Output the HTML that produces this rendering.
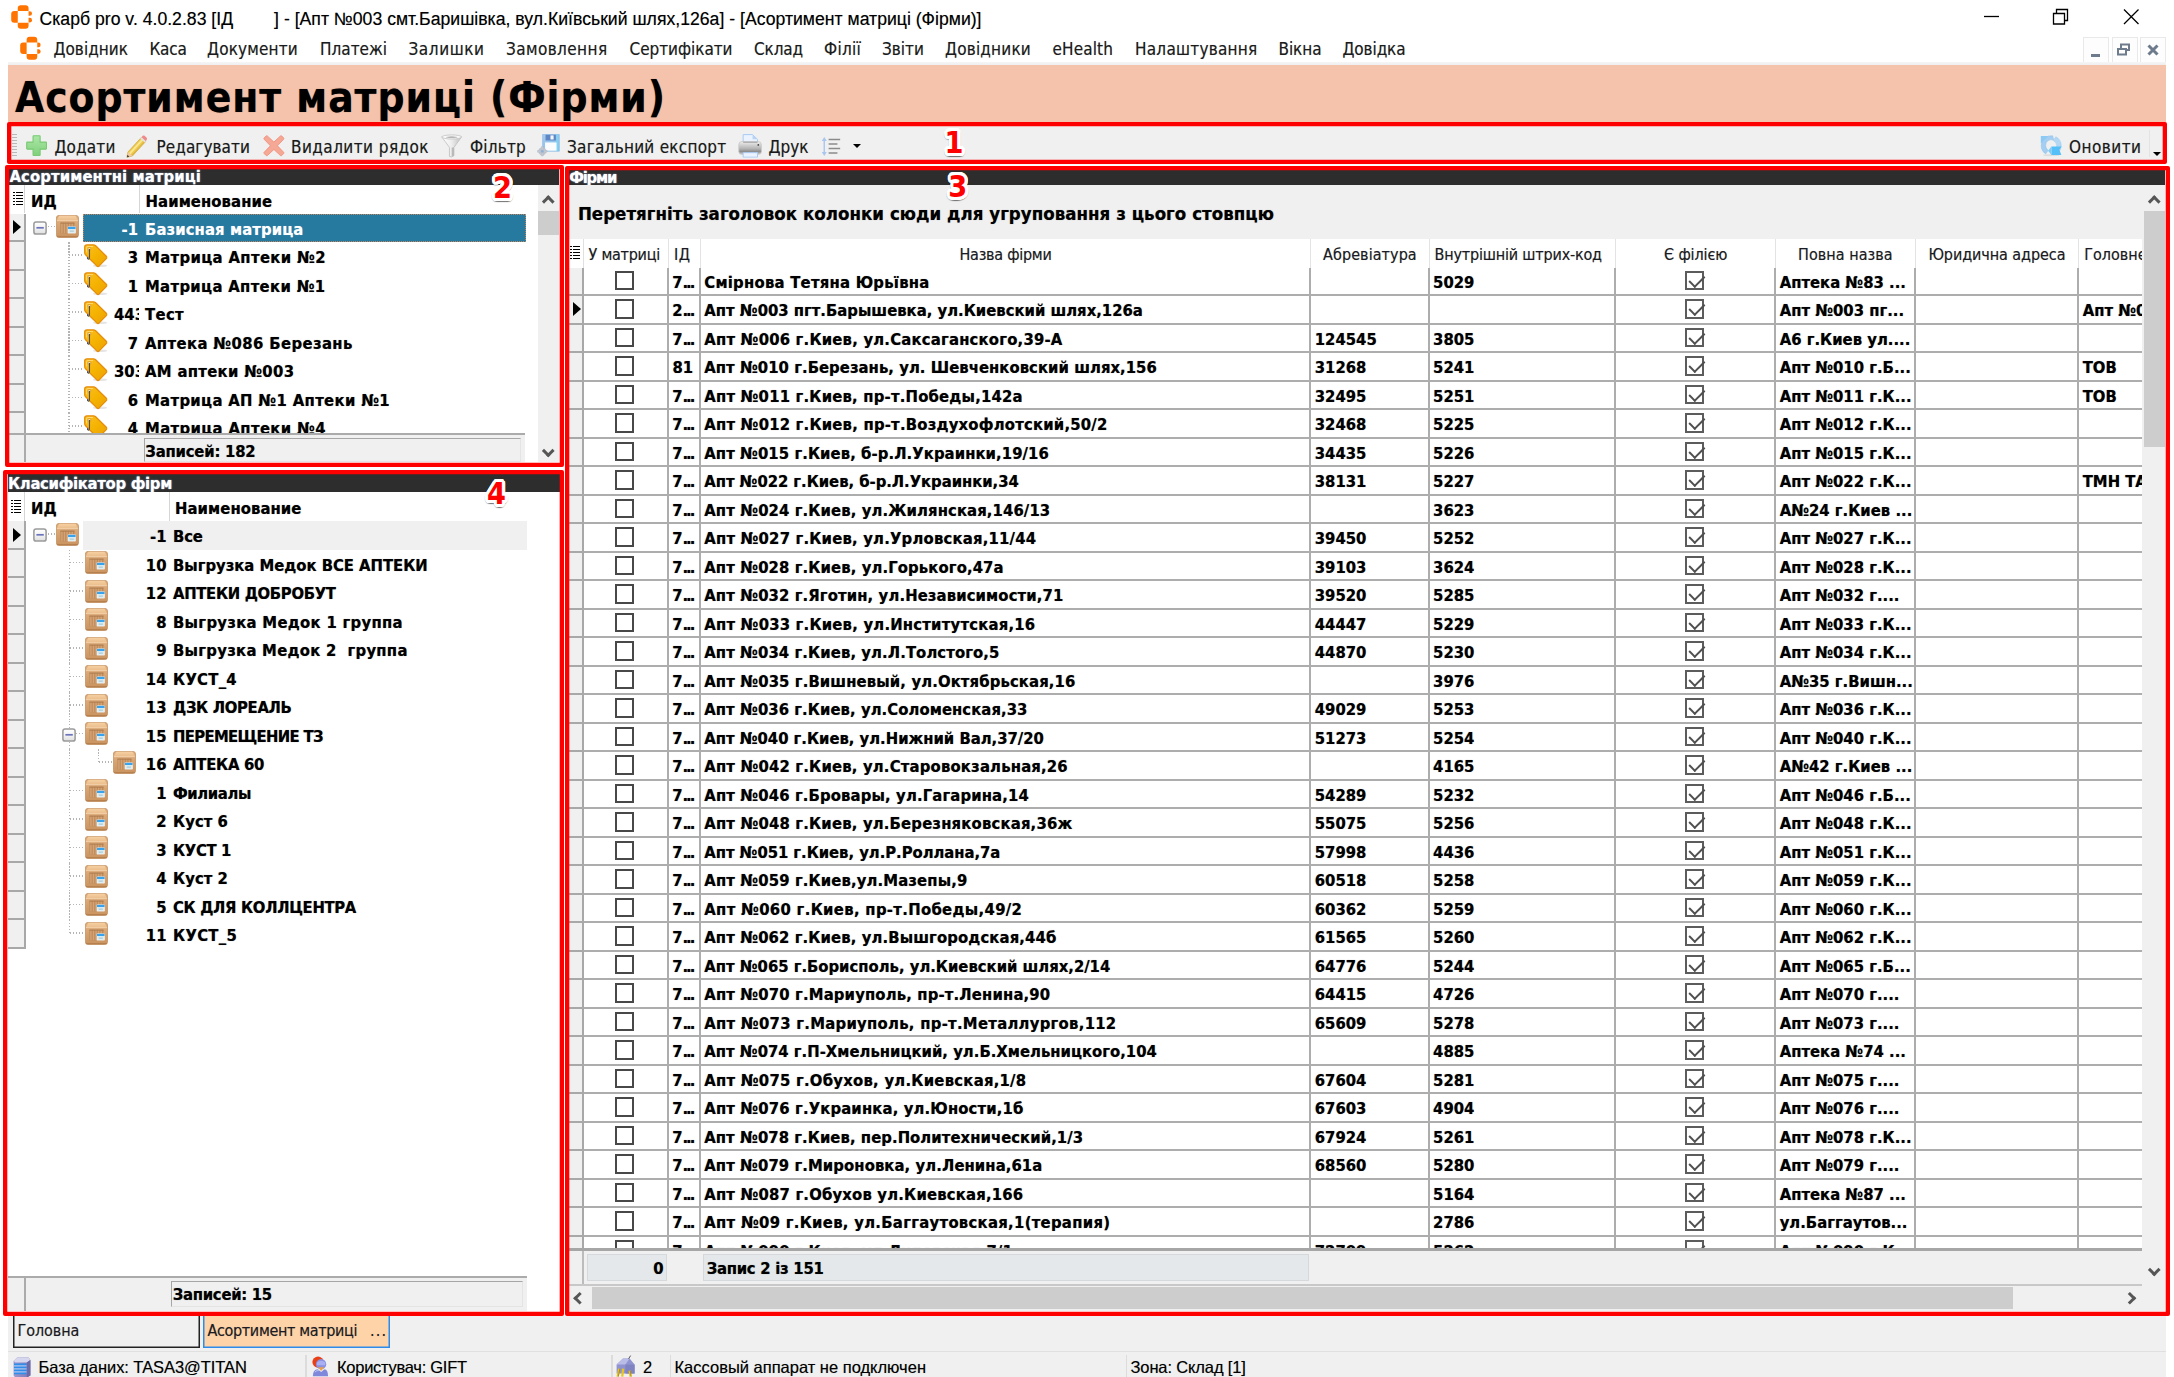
<!DOCTYPE html>
<html lang="uk"><head><meta charset="utf-8"><title>Скарб pro - Асортимент матриці (Фірми)</title>
<style>
*{box-sizing:border-box;margin:0;padding:0}
html,body{width:2174px;height:1377px;overflow:hidden;background:#fff}
body{position:relative;font-family:"DejaVu Sans Condensed","Liberation Sans","DejaVu Sans",sans-serif;font-size:16.5px;color:#000;-webkit-font-smoothing:antialiased}
i{font-style:normal;display:block;position:absolute}
.ic{position:absolute;overflow:visible}
#defs{position:absolute;width:0;height:0;overflow:hidden}

#titlebar{position:absolute;left:0;top:0;width:2174px;height:36px;background:#fff}
#wtitle{position:absolute;left:39.5px;top:8px;font-family:"Liberation Sans","DejaVu Sans",sans-serif;font-size:17.65px;line-height:22px;white-space:nowrap;color:#000}
#wtitle .gap{display:inline-block;width:41px}

#menubar{position:absolute;left:0;top:36px;width:2166px;height:28.5px;background:#fff}
#menubar:after{content:"";position:absolute;left:8px;right:0;bottom:0;height:2.5px;background:linear-gradient(#f6f6f6,#eeeeee)}
.mi{position:absolute;top:3.4px;font-size:17px;line-height:20px;white-space:nowrap;color:#1c1c1c}
.mdib{position:absolute;top:.6px;width:26px;height:26px;border:1.5px solid #e9e9e9;background:#fdfdfd}
.mdib svg{position:absolute;left:-1.5px;top:-1.5px}

#band{position:absolute;left:8px;top:64.5px;width:2158px;height:58px;background:#f5c2ab}
#band h1{position:absolute;left:7px;top:7.5px;font-size:42px;line-height:52px;font-weight:bold;white-space:nowrap}

#toolbar{position:absolute;left:8px;top:122px;width:2158px;height:42.5px;background:#f0f0f0;border-bottom:1.5px solid #fafafa}
#toolbar .ic,#toolbar .tbt,#toolbar i{margin-left:-8px;margin-top:-122px}
.tbt{position:absolute;top:136.7px;font-size:17px;line-height:20px;white-space:nowrap;color:#1a1a1a}
.grip{position:absolute;left:4px;top:11.8px;width:5px;height:22.5px;background:repeating-linear-gradient(#b9b9b9 0 1.5px,#f0f0f0 1.5px 3px)}
.tri{width:0;height:0;border-left:4.2px solid transparent;border-right:4.2px solid transparent;border-top:4.5px solid #000}
.tbsep{top:130px;width:1px;height:27px;background:#e3e3e3}

.panel{position:absolute;background:#fff;overflow:hidden}
#p2{left:9px;top:169px;width:549.8px;height:293px}
#p4{left:7.5px;top:474.4px;width:552.5px;height:836.8px}
#p3{left:568.7px;top:170px;width:1596.8px;height:1141.3px}
.cap{position:absolute;left:0;top:0;right:0;background:#2d2d2d;color:#fff;font-weight:bold;font-size:16.5px;line-height:16px;white-space:nowrap;overflow:hidden;padding-left:.5px;text-shadow:0 0 1.5px rgba(190,215,255,.9)}

.thead{position:absolute;left:0;right:0;height:28.9px;background:#fff;font-weight:bold;line-height:33.5px;white-space:nowrap}
.thead span{position:absolute;top:0;height:100%}
.hind{left:0;width:16px;border-right:1px solid #d6d6d6;background:#fff}
.hind:before{content:"";position:absolute;left:3.6px;top:7.6px;width:10px;height:13.5px;
 background:linear-gradient(90deg,#000 0 2px,transparent 2px 3.2px,#000 3.2px) ;
 -webkit-mask:repeating-linear-gradient(#000 0 1.5px,transparent 1.5px 3px);mask:repeating-linear-gradient(#000 0 1.5px,transparent 1.5px 3px)}
.thead .h1{left:16px;padding-left:6px;border-right:1px solid #d6d6d6}
.thead .h2{padding-left:5.6px}
#p2 .h2{left:131px}
#p4 .hind{width:17.5px}
#p4 .h1{left:17.5px}
#p4 .h2{left:161.9px}

.tbody{position:absolute;left:0;right:0;overflow:hidden}
.tr{position:relative;height:28.5px;font-weight:bold;line-height:32.5px;overflow:hidden;white-space:nowrap}
.tr>span{position:absolute;top:0;height:28.5px}
.ind{left:0;width:16.5px;background:#f0f0f0;border-right:2px solid #a8a8a8;border-bottom:2px solid #a8a8a8}
#p4 .ind{width:18px}
.cur{left:4.4px;top:6.6px;width:0;height:0;border-top:7.6px solid transparent;border-bottom:7.6px solid transparent;border-left:8.4px solid #000}
#p4 .cur{left:5.9px}
.tr .id{left:0;text-align:right}
.tr .idc{left:105px;width:24.5px;overflow:hidden;text-align:left}
.tr .hl{background:#f0f0f0}
.tr.sel .hl{background:#26799f;outline:1.3px dotted #c8855a;outline-offset:-1.3px}
.tr.sel .id,.tr.sel .nm{color:#fff}
.vd{top:0;width:1.5px;height:28.5px;background:repeating-linear-gradient(#b4b4b4 0 1.5px,transparent 1.5px 3px)}
.vd.half{height:14px}
.hd{top:12.2px;height:1.5px;background:repeating-linear-gradient(90deg,#b4b4b4 0 1.5px,transparent 1.5px 3px)}
.tfoot{position:absolute;left:0;background:#f0f0f0;border-top:2px solid #ababab;font-weight:bold}
.tfoot .find{position:absolute;left:0;top:0;bottom:0;width:16.5px;border-right:2px solid #ababab}
#p4 .tfoot .find{width:18px}
.fcell{position:absolute;border:1.5px solid #a6a6a6;border-right-color:#e4e4e4;border-bottom-color:#e4e4e4;background:#f0f0f0;padding-left:.8px;line-height:25px;white-space:nowrap}

.vsb{position:absolute;width:21.3px;background:#f0f0f0}
.vsb .thumb{left:0;right:0;background:#cdcdcd}
.ch{width:8.5px;height:8.5px;border:solid #565656;border-width:3px 0 0 3px}
.vsb .ch{left:6.6px}
.ch.up{transform:rotate(45deg)}
.ch.dn{transform:rotate(225deg)}
.ch.lf{transform:rotate(-45deg);top:8.5px}
.ch.rt{transform:rotate(135deg);top:8.5px}

#grp{position:absolute;left:0;right:0;top:14.6px;height:54.2px;background:#f0f0f0;font-size:18.5px;line-height:22px;padding:18px 0 0 9.2px;white-space:nowrap}
#ghead{position:absolute;left:0;top:68.8px;width:1573.5px;height:29.6px;background:#fff;white-space:nowrap;overflow:hidden;font-size:16px;line-height:31.5px;color:#1c1c24;display:flex}
#ghead .hind{position:relative;flex:none;width:14.9px;border-right:1px solid #e0e0e0}
#ghead .hind:before{left:1.2px;top:7.6px}
.gh{flex:none;overflow:hidden;border-right:1px solid #e3e3e3;padding:0 5px}
.gh.c{text-align:center}
#gbody{position:absolute;left:0;top:97.5px;width:1573.5px;height:981.3px;overflow:hidden;background:#fff}
.gr{display:flex;height:28.5px;font-weight:bold;line-height:29.1px;white-space:nowrap}
.gr .ind{position:relative;flex:none;width:14.9px;height:28.5px}
.gr .ind .cur{left:4.3px;top:6.4px}
.gc{position:relative;flex:none;height:28.5px;overflow:hidden;border-right:2px solid #adadad;border-bottom:2px solid #adadad;padding-left:3.5px}
.gc.r{text-align:right;padding:0 5.6px 0 0}
.gc .dd{letter-spacing:-2.1px}
.gc.last{border-right:0}
.cb{left:50%;top:3px;margin-left:-10.6px;width:19.5px;height:19.5px;border:2px solid #484848;background:#fff}
.cb.on{border-color:#5c5c5c;margin-left:-10.3px}
.cb.on:after{content:"";position:absolute;left:-1.2px;top:.2px;width:6.8px;height:12.8px;border:solid #505050;border-width:0 2.1px 2.1px 0;transform-origin:100% 100%;transform:rotate(45deg)}
#gfoot{position:absolute;left:0;top:1078.4px;width:1573.5px;height:37.2px;background:#f0f0f0;border-top:3px solid #a6a6a6;border-bottom:2px solid #c8c8c8;font-weight:bold}
#gfoot .find{position:absolute;left:0;top:0;bottom:0;width:14.9px;border-right:2px solid #bcbcbc}
.fc{position:absolute;top:3px;height:27px;line-height:27.5px;background:#e4e8ea;border:1px solid #d5d9db;white-space:nowrap}
#hsb{position:absolute;left:0;top:1115.6px;width:1573.5px;height:25.7px;background:#f0f0f0}
#hsb .thumb{top:1.3px;height:22px;background:#cdcdcd}
#vsb3{left:1573.5px;top:14.6px;width:23.3px;height:1101px}
#p3{background:#f0f0f0}
#vsb3 .ch{left:7.5px}
#vsb3 .thumb{left:2.2px}

.red{position:absolute;box-shadow:inset 0 0 0 4.3px #fe0000;border-radius:2px;pointer-events:none}
.badge{position:absolute;font-family:"DejaVu Sans Condensed","Liberation Sans","DejaVu Sans",sans-serif;font-weight:bold;font-size:30.3px;line-height:34px;color:#fe0000;text-shadow:3.00px 0.00px 0 #fff,2.90px 0.78px 0 #fff,2.60px 1.50px 0 #fff,2.12px 2.12px 0 #fff,1.50px 2.60px 0 #fff,0.78px 2.90px 0 #fff,0.00px 3.00px 0 #fff,-0.78px 2.90px 0 #fff,-1.50px 2.60px 0 #fff,-2.12px 2.12px 0 #fff,-2.60px 1.50px 0 #fff,-2.90px 0.78px 0 #fff,-3.00px 0.00px 0 #fff,-2.90px -0.78px 0 #fff,-2.60px -1.50px 0 #fff,-2.12px -2.12px 0 #fff,-1.50px -2.60px 0 #fff,-0.78px -2.90px 0 #fff,-0.00px -3.00px 0 #fff,0.78px -2.90px 0 #fff,1.50px -2.60px 0 #fff,2.12px -2.12px 0 #fff,2.60px -1.50px 0 #fff,2.90px -0.78px 0 #fff,1.60px 0.00px 0 #fff,1.39px 0.80px 0 #fff,0.80px 1.39px 0 #fff,0.00px 1.60px 0 #fff,-0.80px 1.39px 0 #fff,-1.39px 0.80px 0 #fff,-1.60px 0.00px 0 #fff,-1.39px -0.80px 0 #fff,-0.80px -1.39px 0 #fff,-0.00px -1.60px 0 #fff,0.80px -1.39px 0 #fff,1.39px -0.80px 0 #fff,3.00px 1.30px 1px rgba(0,0,0,.22),2.77px 2.45px 1px rgba(0,0,0,.22),2.12px 3.42px 1px rgba(0,0,0,.22),1.15px 4.07px 1px rgba(0,0,0,.22),0.00px 4.30px 1px rgba(0,0,0,.22),-1.15px 4.07px 1px rgba(0,0,0,.22),-2.12px 3.42px 1px rgba(0,0,0,.22),-2.77px 2.45px 1px rgba(0,0,0,.22),-3.00px 1.30px 1px rgba(0,0,0,.22)}

#tabs{position:absolute;left:8px;top:1315.6px;width:2158px;height:36px;background:#f0f0f0}
.tab{position:absolute;top:0;height:32px;padding-top:0;box-shadow:inset 1.5px 0 #222,inset -1.5px 0 #222,inset 0 -1.5px #222;font-size:16px;line-height:29.5px;padding-left:5px;white-space:nowrap;color:#1c1c24}
.tab.act{background:#ffd3a8;box-shadow:inset 1.5px 0 #2d8ceb,inset -1.5px 0 #2d8ceb,inset 0 -1.5px #2d8ceb}
#status{position:absolute;left:8px;top:1350.6px;width:2158px;height:26.4px;background:#f0f0f0;border-top:1.5px solid #e0e0e0}
#status .ic,#status .st,#status .ssep{margin-top:-1.5px}
.st{position:absolute;top:7.2px;font-family:"Liberation Sans","DejaVu Sans",sans-serif;font-size:16.5px;line-height:20px;white-space:nowrap;color:#000}
.ssep{top:5px;width:1.5px;height:22px;background:#dcdcdc}

.tab .dots{position:absolute;left:167.5px;top:0;font-style:normal;letter-spacing:1.2px}

.gr,.tr,.thead,.tfoot,#gfoot,#grp,#band h1{text-shadow:0 0 .8px rgba(0,0,0,.5)}
.tr.sel .id,.tr.sel .nm{text-shadow:0 0 .8px rgba(255,255,255,.5)}
.mi,.tbt,.gh,.tab,.st,#wtitle{text-shadow:0 0 .7px rgba(0,0,0,.35)}

</style></head><body>
<svg id="defs" width="0" height="0" aria-hidden="true"><defs>
<linearGradient id="gBoxF" x1="0" y1="0" x2="0" y2="1"><stop offset="0" stop-color="#e2b281"/><stop offset="1" stop-color="#c9935f"/></linearGradient>
<linearGradient id="gBoxT" x1="0" y1="0" x2="0" y2="1"><stop offset="0" stop-color="#f6d0a2"/><stop offset="1" stop-color="#ebbd8b"/></linearGradient>
<linearGradient id="gTag" x1="0" y1="0" x2="1" y2="1"><stop offset="0" stop-color="#fbbf24"/><stop offset=".5" stop-color="#f5b301"/><stop offset="1" stop-color="#ec9f06"/></linearGradient>
<linearGradient id="gPlus" x1="0" y1="0" x2="0" y2="1"><stop offset="0" stop-color="#abe7a6"/><stop offset="1" stop-color="#7fd07b"/></linearGradient>
<linearGradient id="gMinus" x1="0" y1="0" x2="0" y2="1"><stop offset="0" stop-color="#ffffff"/><stop offset=".5" stop-color="#f3f3f3"/><stop offset="1" stop-color="#dedede"/></linearGradient>
<linearGradient id="gPrn" x1="0" y1="0" x2="0" y2="1"><stop offset="0" stop-color="#eeeeee"/><stop offset=".55" stop-color="#b4b4b4"/><stop offset=".78" stop-color="#8c8c8c"/><stop offset="1" stop-color="#d2d2d2"/></linearGradient>
<linearGradient id="gFun" x1="0" y1="0" x2="1" y2="0"><stop offset="0" stop-color="#ffffff"/><stop offset=".5" stop-color="#ededed"/><stop offset="1" stop-color="#bdbdbd"/></linearGradient>
<linearGradient id="gSave" x1="0" y1="0" x2="1" y2="1"><stop offset="0" stop-color="#a9c7ea"/><stop offset="1" stop-color="#7fc4ee"/></linearGradient>
<linearGradient id="gDb" x1="0" y1="0" x2="1" y2="0"><stop offset="0" stop-color="#9b97cf"/><stop offset="1" stop-color="#7d79b4"/></linearGradient>
<symbol id="logo" viewBox="0 0 22 24"><g fill="#ff7400"><path d="M10 0H14.800Q17.900 0 17.900 3V5.900H6.900V3Q6.900 0 10 0z"/><path d="M3.300 5.900H6.900V18H3.300Q.2 18 .2 14.900V9Q.2 5.900 3.300 5.900z"/><path d="M6.900 18H17.900V20.900Q17.900 23.900 14.800 23.900H10Q6.900 23.900 6.900 20.900z"/><path d="M17.900 6.100H19Q21.400 6.100 21.400 8.500Q21.400 10.900 19 10.900H17.900z"/><path d="M17.900 12.900H19Q21.400 12.900 21.400 15.300Q21.400 17.700 19 17.700H17.900z"/></g></symbol>
<symbol id="box" viewBox="0 0 24 24"><rect x=".4" y=".4" width="23.2" height="23.2" rx="2.8" fill="url(#gBoxF)" stroke="#c18d5c" stroke-width=".8"/><path d="M1 5.6L3.2 1.2Q3.6.8 4.2.8H19.8Q20.4.8 20.8 1.2L23 5.6z" fill="url(#gBoxT)"/><path d="M1 5.9h22" stroke="#f7dcb8" stroke-width=".8"/><path d="M4.6 8.2h14.8v11.2H4.6z" fill="#bd8a5b"/><path d="M6.2 8.6v10.6M8.9 8.6v10.6M11.6 8.6v10.6M14.3 8.6v5M17 8.6v5" stroke="#d5a373" stroke-width="1.5"/><path d="M4.6 8.5h14.8" stroke="#a97848" stroke-width=".9"/><path d="M1 22.6h22" stroke="#b7814f" stroke-width="1.2"/><rect x="12.6" y="12.4" width="7.9" height="6.6" fill="#d9edf3" stroke="#fff" stroke-width=".5"/><rect x="12.6" y="12.4" width="7.9" height="2.3" fill="#37a3ef"/><path d="M14.4 16.900h4.300" stroke="#aac3cc" stroke-width="1.1"/></symbol>
<symbol id="tag" viewBox="0 0 24 24"><ellipse cx="16.5" cy="22.2" rx="7.5" ry="1.3" fill="#000" opacity=".10"/><path d="M3 .8H9.6Q10.9.8 11.9 1.8L23 12.7Q23.8 13.7 23 14.7L15.3 22.6Q14.3 23.4 13.3 22.6L1.6 11Q.7 10 .7 8.6V3Q.7.8 3 .8z" fill="url(#gTag)" stroke="#e58d0c" stroke-width="1.3"/><path d="M2.6 8.6V3.6Q2.6 2.6 3.8 2.6H9.2" fill="none" stroke="#ffd873" stroke-width="1"/><rect x="4.2" y="3.8" width="2.6" height="2.4" rx=".6" fill="#fff1cf" stroke="#c47f0c" stroke-width=".6"/><path d="M5.6 5V13.6Q5.6 15.6 4.3 15.4 3.2 15 3.6 13.4" fill="none" stroke="#4e5258" stroke-width="1.15"/></symbol>
<symbol id="minus" viewBox="0 0 14 14"><rect x=".9" y=".9" width="12.2" height="12.2" rx="2.2" fill="url(#gMinus)" stroke="#9a9a9a" stroke-width="1.5"/><path d="M3.4 6.8h7.4" stroke="#6a73bb" stroke-width="1.7"/></symbol>
<symbol id="plus" viewBox="0 0 21 21"><path d="M7.6.7h5.8Q14 .7 14 1.3V7h5.7Q20.3 7 20.3 7.6v5.8Q20.3 14 19.7 14H14v5.7Q14 20.3 13.4 20.3H7.6Q7 20.3 7 19.7V14H1.3Q.7 14 .7 13.4V7.6Q.7 7 1.3 7H7V1.3Q7 .7 7.6.7z" fill="url(#gPlus)" stroke="#79c975" stroke-width="1.1"/></symbol>
<symbol id="pencil" viewBox="0 0 22 24"><path d="M.7 23.300L1.800 17.800 15.700 2.600 20.300 6.800 6.400 22z" fill="#eec94c" stroke="#caa338" stroke-width=".7"/><path d="M3.700 19.400L17.400 4.400" stroke="#f9e792" stroke-width="1.900"/><path d="M6 21.200L19.500 6.400" stroke="#d9b13c" stroke-width="1"/><path d="M15.700 2.600l1.500-1.700Q18.200 0 19.200.8L21.400 2.800Q22.200 3.800 21.400 4.900L20.300 6.800z" fill="#f08a8a"/><path d="M14.700 3.700l1.300-1.400 4.600 4.200-1.300 1.400z" fill="#dfe2e6"/><path d="M.7 23.300L1.800 17.800l4.600 4.200z" fill="#f2cba6"/><path d="M.7 23.300l.6-2.600 2 1.900z" fill="#3a3a3a"/></symbol>
<symbol id="cross" viewBox="0 0 22 22"><path d="M4.2.9L11 7.2 17.8.9Q18.4.5 19 1l2 2.1Q21.5 3.700 21 4.300L14.600 11 21 17.700Q21.500 18.300 21 18.900L19 21Q18.400 21.500 17.800 21.100L11 14.800 4.200 21.100Q3.600 21.500 3 21L1 18.900Q.5 18.300 1 17.700L7.400 11 1 4.300Q.5 3.700 1 3.100L3 1Q3.600.5 4.200.9z" fill="#f6a896" stroke="#f08f7b" stroke-width=".9"/></symbol>
<symbol id="funnel" viewBox="0 0 22 24"><path d="M.8 2.600L8.700 13.500V22.800Q11 24 13.300 22V13.500L21.200 2.600z" fill="url(#gFun)" stroke="#c2c2c2" stroke-width=".9"/><path d="M11 13.500V23l2.300-1V13.500z" fill="#b9b9b9"/><ellipse cx="11" cy="2.700" rx="10.200" ry="2.100" fill="#f8f8f8" stroke="#c6c6c6" stroke-width=".9"/><ellipse cx="11" cy="3" rx="6" ry=".9" fill="#b5b5b5"/></symbol>
<symbol id="save" viewBox="0 0 23 23"><path d="M5.500.5H22.500V17.500H7L5.500 16z" fill="url(#gSave)" stroke="#8bbbe6" stroke-width=".7"/><rect x="8.500" y=".8" width="10.500" height="5.800" fill="#5f86c4"/><rect x="13.500" y="1.400" width="3.200" height="4.200" fill="#f2f7fd"/><rect x="8" y="8.600" width="12" height="8.400" fill="#fbfcfe"/><path d="M20.600.8V17.200" stroke="#7fd4f4" stroke-width="1.600"/><g fill="#c5ccd5" stroke="#b0b8c2" stroke-width=".5"><circle cx="5.200" cy="17.600" r="3.700"/><rect x="4.200" y="12.600" width="2" height="10" rx=".6"/><rect x=".2" y="16.600" width="10" height="2" rx=".6"/></g><circle cx="5.200" cy="17.600" r="1.400" fill="#8fb0d6"/></symbol>
<symbol id="printer" viewBox="0 0 24 24"><path d="M5 .6H14.500L19.500 5.400V9H5z" fill="#eaf3ff" stroke="#a9c9f2" stroke-width="1"/><path d="M14.500.6V5.400H19.500z" fill="#b9d3f5"/><rect x=".6" y="7.600" width="22.800" height="13" rx="3.200" fill="url(#gPrn)" stroke="#c8c8c8" stroke-width=".8"/><path d="M5 8.300H19.500" stroke="#9c9c9c" stroke-width="1"/><path d="M5 18.800H19.500V23.400H5z" fill="#eaf3ff" stroke="#a9c9f2" stroke-width="1"/><circle cx="20.300" cy="11" r=".9" fill="#444"/></symbol>
<symbol id="lines" viewBox="0 0 20 20"><path d="M3.300 2.500v15.500" stroke="#a8c6ee" stroke-width="1.400"/><path d="M.8 4.800L3.300.8 5.800 4.800zM.8 16L3.300 20 5.800 16z" fill="#a8c6ee"/><path d="M7.700 3.400H19.400M7.700 7.900H16.600M7.700 12.400H19.400M7.700 16.900H16.600" stroke="#8a8a8a" stroke-width="1.600"/></symbol>
<symbol id="refresh" viewBox="0 0 22 21"><ellipse cx="11" cy="19.800" rx="8" ry="1" fill="#000" opacity=".08"/><path d="M1.200 10.500A9.800 9.800 0 0 1 12.500.8L13.500 5.200A5.400 5.400 0 0 0 5.600 10.500 5.400 5.400 0 0 0 8 15L5.600 18.600A9.800 9.800 0 0 1 1.200 10.500z" fill="#a4cff2" stroke="#8fc1ec" stroke-width=".5"/><path d="M.8.900H8.300L.8 8.400z" fill="#8ccaf5"/><path d="M20.800 10.500A9.800 9.800 0 0 0 15.500 1.700L13.300 5.600A5.400 5.400 0 0 1 16.400 10.500 5.400 5.400 0 0 1 15.200 13.900L18.600 16.800A9.800 9.800 0 0 0 20.800 10.500z" fill="#b3d8f5" stroke="#9bcaef" stroke-width=".5"/><path d="M11.200 11.200H21.400L19 14.400 21 19.600H11.200z" fill="#55bff8"/><path d="M11.200 11.200V19.600L8 15.500z" fill="#7ccbf8"/></symbol>
<symbol id="db" viewBox="0 0 18 21"><path d="M.6 4L4.200.6H15.600L17.400 3V18.400L13.800 20.600H2.400L.6 18.400z" fill="url(#gDb)"/><path d="M.6 4L4.200.6H15.600L17.400 3 13.800 5.400H2.400z" fill="#d6d6ee"/><path d="M13.800 5.400L17.400 3V18.400L13.800 20.600z" fill="#6d69a6"/><path d="M1 7.400H13.600M1 10.400H13.600M1 13.400H13.600M1 16.400H13.600" stroke="#2f8eea" stroke-width="1.700"/><path d="M1 8.900H13.600M1 11.900H13.600M1 14.900H13.600" stroke="#9fd0ff" stroke-width="1"/></symbol>
<symbol id="user" viewBox="0 0 17 21"><circle cx="6.200" cy="6.300" r="5.800" fill="#e93f17"/><circle cx="9.400" cy="8.400" r="5.300" fill="#8a90e2"/><path d="M5 6.600Q9.400 3 13.800 6.600L13.600 9.400H5.200z" fill="#a9aff0"/><path d="M6.400 11.600H12.400L9.400 15.400z" fill="#f0a040"/><path d="M.8 21Q.8 14 6 13.600L9.400 16.600 12.800 13.600Q16.600 14 16.600 21z" fill="#8088dc"/><path d="M3 16.500Q5 14.600 7 15" stroke="#c4c8f6" stroke-width="1" fill="none"/></symbol>
<symbol id="plug" viewBox="0 0 21 22"><path d="M1.600 9.600L8 3.600H14.600L19.600 9.600V18.600H1.600z" fill="#8f93cf"/><path d="M1.600 9.600L8 3.600H14.600L10.400 9.600z" fill="#b9bce6"/><path d="M13.600 3.800L15.600 .6" stroke="#555" stroke-width="1"/><path d="M10.400 9.600H19.600V18.600H10.400z" fill="#7f83c2"/><path d="M4.200 13.600L2.600 21.600M8.200 13.600L7.200 21.600M14.600 15.600L15.600 21.600" stroke="#e9c419" stroke-width="2.200"/><path d="M4.900 13.600L3.300 21.600M15.200 15.600L16.200 21.600" stroke="#8a6d00" stroke-width=".6"/></symbol>
</defs></svg>

<div id="titlebar">
<svg class="ic" style="left:11px;top:5px;width:21.6px;height:23.9px" ><use href="#logo"/></svg>
<div id="wtitle">Скарб pro v. 4.0.2.83 [ІД<span class="gap"></span>] - [Апт №003 смт.Баришівка, вул.Київський шлях,126а] - [Асортимент матриці (Фірми)]</div>
<svg class="ic" style="left:1976px;top:0;width:190px;height:34px" viewBox="0 0 190 34"><g fill="none" stroke="#000" stroke-width="1.3"><path d="M8 16.5h15"/><path d="M77.5 13.5h11v10.5h-11z"/><path d="M80.5 13.5v-4h11v11h-3"/><path d="M148 9.5l14.5 14.5M162.5 9.5L148 24"/></g></svg>
</div>
<div id="menubar">
<svg class="ic" style="left:19.8px;top:0.2px;width:21.2px;height:24.6px" ><use href="#logo"/></svg>
<span class="mi" style="left:53.5px;letter-spacing:0.021px">Довідник</span>
<span class="mi" style="left:149.5px;letter-spacing:-0.254px">Каса</span>
<span class="mi" style="left:207px;letter-spacing:0.177px">Документи</span>
<span class="mi" style="left:320px;letter-spacing:-0.002px">Платежі</span>
<span class="mi" style="left:408.5px;letter-spacing:0.562px">Залишки</span>
<span class="mi" style="left:506px;letter-spacing:0.402px">Замовлення</span>
<span class="mi" style="left:629.5px;letter-spacing:-0.04px">Сертифікати</span>
<span class="mi" style="left:754px;letter-spacing:-0.131px">Склад</span>
<span class="mi" style="left:824px;letter-spacing:0.259px">Філії</span>
<span class="mi" style="left:882px;letter-spacing:0.016px">Звіти</span>
<span class="mi" style="left:945px;letter-spacing:0.193px">Довідники</span>
<span class="mi" style="left:1052.5px;letter-spacing:0.121px">eHealth</span>
<span class="mi" style="left:1135px;letter-spacing:0.243px">Налаштування</span>
<span class="mi" style="left:1278.5px;letter-spacing:-0.072px">Вікна</span>
<span class="mi" style="left:1342.5px;letter-spacing:-0.109px">Довідка</span>
<div class="mdib" style="left:2083px"><i style="left:7px;top:16px;width:9px;height:3px;background:#6d7b8c"></i></div>
<div class="mdib" style="left:2111.5px"><svg viewBox="0 0 26 26" width="26" height="26"><g fill="none" stroke="#6d7b8c" stroke-width="2"><path d="M7 13h8v5.5H7z"/><path d="M10 12V8.5h8V14h-2.5"/></g></svg></div>
<div class="mdib" style="left:2140px"><svg viewBox="0 0 26 26" width="26" height="26"><path d="M8.5 9.5l9 9M17.5 9.5l-9 9" stroke="#6d7b8c" stroke-width="3" fill="none"/></svg></div>
</div>
<div id="band"><h1><span style="letter-spacing:0.963px">Асортимент матриці (Фірми)</span></h1></div>
<div id="toolbar">
<div class="grip"></div>
<svg class="ic" style="left:25.8px;top:135.4px;width:21.2px;height:21.3px" ><use href="#plus"/></svg>
<span class="tbt" style="left:54.5px;letter-spacing:0.148px">Додати</span>
<svg class="ic" style="left:126px;top:134.6px;width:21.5px;height:23px" ><use href="#pencil"/></svg>
<span class="tbt" style="left:156.5px;letter-spacing:0.059px">Редагувати</span>
<svg class="ic" style="left:262.6px;top:135.3px;width:21.8px;height:21.5px" ><use href="#cross"/></svg>
<span class="tbt" style="left:291px;letter-spacing:0.438px">Видалити рядок</span>
<svg class="ic" style="left:441.2px;top:133.8px;width:21.4px;height:24px" ><use href="#funnel"/></svg>
<span class="tbt" style="left:470px;letter-spacing:0.195px">Фільтр</span>
<svg class="ic" style="left:537.2px;top:133.8px;width:23px;height:22.6px" ><use href="#save"/></svg>
<span class="tbt" style="left:567px;letter-spacing:0.256px">Загальний експорт</span>
<svg class="ic" style="left:737.8px;top:134px;width:24.2px;height:23.8px" ><use href="#printer"/></svg>
<span class="tbt" style="left:768.5px;letter-spacing:0.012px">Друк</span>
<svg class="ic" style="left:821.3px;top:135.7px;width:19.8px;height:20.2px" ><use href="#lines"/></svg>
<i class="tri" style="left:853px;top:144px"></i>
<svg class="ic" style="left:2039.8px;top:135.3px;width:22.4px;height:21.4px" ><use href="#refresh"/></svg>
<span class="tbt" style="left:2069px;letter-spacing:0.459px">Оновити</span>
<i class="tbsep" style="left:2149px"></i><i class="tri" style="left:2152.5px;top:152px"></i>
</div>
<div id="p2" class="panel">
<div class="cap" style="height:15.6px"><span style="letter-spacing:0.097px">Асортиментні матриці</span></div>
<div class="thead" style="top:15.6px"><span class="hind"></span><span class="h1" style="width:115px"><span style="letter-spacing:0.172px">ИД</span></span><span class="h2"><span style="letter-spacing:0.072px">Наименование</span></span></div>
<div class="tbody" style="top:44.5px;height:219px">
<div class="tr sel"><span class="ind"><i class="cur"></i></span><span class="hl" style="left:74px;width:442.5px"></span><svg class="ic" style="left:24.1px;top:7.2px;width:14px;height:14px"><use href="#minus"/></svg><i class="hd" style="left:39px;width:8px"></i><svg class="ic" style="left:46.5px;top:1.5px;width:22.9px;height:22.9px"><use href="#box"/></svg><span class="id" style="width:129px">-1</span><span class="nm" style="left:136px"><span style="letter-spacing:0.092px">Базисная матрица</span></span></div>
<div class="tr"><span class="ind"></span><i class="vd" style="left:59px"></i><i class="hd" style="left:60px;width:14px"></i><svg class="ic" style="left:75px;top:1.5px;width:23.5px;height:23.5px"><use href="#tag"/></svg><span class="id" style="width:129px">3</span><span class="nm" style="left:136px"><span style="letter-spacing:0.36px">Матрица Аптеки №2</span></span></div>
<div class="tr"><span class="ind"></span><i class="vd" style="left:59px"></i><i class="hd" style="left:60px;width:14px"></i><svg class="ic" style="left:75px;top:1.5px;width:23.5px;height:23.5px"><use href="#tag"/></svg><span class="id" style="width:129px">1</span><span class="nm" style="left:136px"><span style="letter-spacing:0.331px">Матрица Аптеки №1</span></span></div>
<div class="tr"><span class="ind"></span><i class="vd" style="left:59px"></i><i class="hd" style="left:60px;width:14px"></i><svg class="ic" style="left:75px;top:1.5px;width:23.5px;height:23.5px"><use href="#tag"/></svg><span class="idc">443</span><span class="nm" style="left:136px"><span style="letter-spacing:0.373px">Тест</span></span></div>
<div class="tr"><span class="ind"></span><i class="vd" style="left:59px"></i><i class="hd" style="left:60px;width:14px"></i><svg class="ic" style="left:75px;top:1.5px;width:23.5px;height:23.5px"><use href="#tag"/></svg><span class="id" style="width:129px">7</span><span class="nm" style="left:136px"><span style="letter-spacing:0.382px">Аптека №086 Березань</span></span></div>
<div class="tr"><span class="ind"></span><i class="vd" style="left:59px"></i><i class="hd" style="left:60px;width:14px"></i><svg class="ic" style="left:75px;top:1.5px;width:23.5px;height:23.5px"><use href="#tag"/></svg><span class="idc">303</span><span class="nm" style="left:136px"><span style="letter-spacing:0.316px">АМ аптеки №003</span></span></div>
<div class="tr"><span class="ind"></span><i class="vd" style="left:59px"></i><i class="hd" style="left:60px;width:14px"></i><svg class="ic" style="left:75px;top:1.5px;width:23.5px;height:23.5px"><use href="#tag"/></svg><span class="id" style="width:129px">6</span><span class="nm" style="left:136px"><span style="letter-spacing:0.335px">Матрица АП №1 Аптеки №1</span></span></div>
<div class="tr"><span class="ind"></span><i class="vd" style="left:59px"></i><i class="hd" style="left:60px;width:14px"></i><svg class="ic" style="left:75px;top:1.5px;width:23.5px;height:23.5px"><use href="#tag"/></svg><span class="id" style="width:129px">4</span><span class="nm" style="left:136px"><span style="letter-spacing:0.36px">Матрица Аптеки №4</span></span></div>
</div>
<div class="tfoot" style="top:263.7px;height:29px;width:516px"><span class="find"></span><span class="fcell" style="left:134.5px;width:377px;top:2.9px;height:24.5px"><b><span style="letter-spacing:-0.198px">Записей: 182</span></b></span></div>
<div class="vsb" style="left:528.5px;top:15.6px;height:277px"><i class="ch up" style="top:12px"></i><i class="thumb" style="top:26px;height:24px"></i><i class="ch dn" style="bottom:6px"></i></div>
</div>
<div id="p4" class="panel">
<div class="cap" style="height:18px;line-height:19px"><span style="letter-spacing:-0.312px">Класифікатор фірм</span></div>
<div class="thead" style="top:18px"><span class="hind"></span><span class="h1" style="width:144.5px"><span style="letter-spacing:0.172px">ИД</span></span><span class="h2"><span style="letter-spacing:0.072px">Наименование</span></span></div>
<div class="tbody" style="top:46.8px;height:755px">
<div class="tr foc"><span class="ind"><i class="cur"></i></span><span class="hl" style="left:75.5px;width:444px"></span><svg class="ic" style="left:25.5px;top:7.2px;width:14px;height:14px"><use href="#minus"/></svg><i class="hd" style="left:40.5px;width:8px"></i><svg class="ic" style="left:48.5px;top:1.5px;width:22.9px;height:22.9px"><use href="#box"/></svg><span class="id" style="width:159px">-1</span><span class="nm" style="left:165.5px"><span style="letter-spacing:-0.129px">Все</span></span></div>
<div class="tr"><span class="ind"></span><i class="vd" style="left:61px"></i><i class="hd" style="left:62px;width:14px"></i><svg class="ic" style="left:77px;top:1.5px;width:22.9px;height:22.9px"><use href="#box"/></svg><span class="id" style="width:159px">10</span><span class="nm" style="left:165.5px"><span style="letter-spacing:-0.021px">Выгрузка Медок ВСЕ АПТЕКИ</span></span></div>
<div class="tr"><span class="ind"></span><i class="vd" style="left:61px"></i><i class="hd" style="left:62px;width:14px"></i><svg class="ic" style="left:77px;top:1.5px;width:22.9px;height:22.9px"><use href="#box"/></svg><span class="id" style="width:159px">12</span><span class="nm" style="left:165.5px"><span style="letter-spacing:-0.323px">АПТЕКИ ДОБРОБУТ</span></span></div>
<div class="tr"><span class="ind"></span><i class="vd" style="left:61px"></i><i class="hd" style="left:62px;width:14px"></i><svg class="ic" style="left:77px;top:1.5px;width:22.9px;height:22.9px"><use href="#box"/></svg><span class="id" style="width:159px">8</span><span class="nm" style="left:165.5px"><span style="letter-spacing:0.298px">Выгрузка Медок 1 группа</span></span></div>
<div class="tr"><span class="ind"></span><i class="vd" style="left:61px"></i><i class="hd" style="left:62px;width:14px"></i><svg class="ic" style="left:77px;top:1.5px;width:22.9px;height:22.9px"><use href="#box"/></svg><span class="id" style="width:159px">9</span><span class="nm" style="left:165.5px"><span style="letter-spacing:0.27px">Выгрузка Медок 2&nbsp; группа</span></span></div>
<div class="tr"><span class="ind"></span><i class="vd" style="left:61px"></i><i class="hd" style="left:62px;width:14px"></i><svg class="ic" style="left:77px;top:1.5px;width:22.9px;height:22.9px"><use href="#box"/></svg><span class="id" style="width:159px">14</span><span class="nm" style="left:165.5px"><span style="letter-spacing:0.257px">КУСТ_4</span></span></div>
<div class="tr"><span class="ind"></span><i class="vd" style="left:61px"></i><i class="hd" style="left:62px;width:14px"></i><svg class="ic" style="left:77px;top:1.5px;width:22.9px;height:22.9px"><use href="#box"/></svg><span class="id" style="width:159px">13</span><span class="nm" style="left:165.5px"><span style="letter-spacing:-0.323px">ДЗК ЛОРЕАЛЬ</span></span></div>
<div class="tr"><span class="ind"></span><i class="vd" style="left:61px"></i><i class="hd" style="left:62px;width:14px"></i><svg class="ic" style="left:54.5px;top:7.5px;width:14px;height:14px"><use href="#minus"/></svg><svg class="ic" style="left:77px;top:1.5px;width:22.9px;height:22.9px"><use href="#box"/></svg><span class="id" style="width:159px">15</span><span class="nm" style="left:165.5px"><span style="letter-spacing:-0.669px">ПЕРЕМЕЩЕНИЕ ТЗ</span></span></div>
<div class="tr"><span class="ind"></span><i class="vd" style="left:61px"></i><i class="vd half" style="left:90px"></i><i class="hd" style="left:91px;width:13px"></i><svg class="ic" style="left:105.5px;top:1.5px;width:22.9px;height:22.9px"><use href="#box"/></svg><span class="id" style="width:159px">16</span><span class="nm" style="left:165.5px"><span style="letter-spacing:-0.282px">АПТЕКА 60</span></span></div>
<div class="tr"><span class="ind"></span><i class="vd" style="left:61px"></i><i class="hd" style="left:62px;width:14px"></i><svg class="ic" style="left:77px;top:1.5px;width:22.9px;height:22.9px"><use href="#box"/></svg><span class="id" style="width:159px">1</span><span class="nm" style="left:165.5px"><span style="letter-spacing:-0.388px">Филиалы</span></span></div>
<div class="tr"><span class="ind"></span><i class="vd" style="left:61px"></i><i class="hd" style="left:62px;width:14px"></i><svg class="ic" style="left:77px;top:1.5px;width:22.9px;height:22.9px"><use href="#box"/></svg><span class="id" style="width:159px">2</span><span class="nm" style="left:165.5px"><span style="letter-spacing:0.047px">Куст 6</span></span></div>
<div class="tr"><span class="ind"></span><i class="vd" style="left:61px"></i><i class="hd" style="left:62px;width:14px"></i><svg class="ic" style="left:77px;top:1.5px;width:22.9px;height:22.9px"><use href="#box"/></svg><span class="id" style="width:159px">3</span><span class="nm" style="left:165.5px"><span style="letter-spacing:-0.352px">КУСТ 1</span></span></div>
<div class="tr"><span class="ind"></span><i class="vd" style="left:61px"></i><i class="hd" style="left:62px;width:14px"></i><svg class="ic" style="left:77px;top:1.5px;width:22.9px;height:22.9px"><use href="#box"/></svg><span class="id" style="width:159px">4</span><span class="nm" style="left:165.5px"><span style="letter-spacing:0.047px">Куст 2</span></span></div>
<div class="tr"><span class="ind"></span><i class="vd" style="left:61px"></i><i class="hd" style="left:62px;width:14px"></i><svg class="ic" style="left:77px;top:1.5px;width:22.9px;height:22.9px"><use href="#box"/></svg><span class="id" style="width:159px">5</span><span class="nm" style="left:165.5px"><span style="letter-spacing:-0.328px">СК ДЛЯ КОЛЛЦЕНТРА</span></span></div>
<div class="tr"><span class="ind"></span><i class="vd half" style="left:61px"></i><i class="hd" style="left:62px;width:14px"></i><svg class="ic" style="left:77px;top:1.5px;width:22.9px;height:22.9px"><use href="#box"/></svg><span class="id" style="width:159px">11</span><span class="nm" style="left:165.5px"><span style="letter-spacing:0.273px">КУСТ_5</span></span></div>
</div>
<div class="tfoot" style="top:801.8px;height:35px;width:519.5px"><span class="find"></span><span class="fcell" style="left:163.5px;width:352px;top:2.9px;height:25.5px"><b><span style="letter-spacing:-0.286px">Записей: 15</span></b></span></div>
</div>
<div id="p3" class="panel">
<div class="cap" style="height:14.6px"><span style="letter-spacing:-1.214px">Фірми</span></div>
<div id="grp"><b><span style="letter-spacing:0.035px">Перетягніть заголовок колонки сюди для угруповання з цього стовпцю</span></b></div>
<div id="ghead"><span class="hind"></span>
<span class="gh l" style="width:85.5px"><span style="letter-spacing:-0.256px">У матриці</span></span>
<span class="gh l" style="width:31.7px"><span style="letter-spacing:0.55px">ІД</span></span>
<span class="gh c" style="width:610.5px"><span style="letter-spacing:-0.259px">Назва фірми</span></span>
<span class="gh c" style="width:118.3px"><span style="letter-spacing:0.074px">Абревіатура</span></span>
<span class="gh l" style="width:186.6px"><span style="letter-spacing:-0.187px">Внутрішній штрих-код</span></span>
<span class="gh c" style="width:160px"><span style="letter-spacing:-0.12px">Є філією</span></span>
<span class="gh c" style="width:139.4px"><span style="letter-spacing:0.034px">Повна назва</span></span>
<span class="gh c" style="width:163.7px"><span style="letter-spacing:-0.077px">Юридична адреса</span></span>
<span class="gh l" style="width:63.5px">Головне підприємство</span>
</div>
<div id="gbody">
<div class="gr"><span class="ind"></span><span class="gc" style="width:85.5px"><i class="cb"></i></span><span class="gc r" style="width:31.7px">7<span class=dd>...</span></span><span class="gc" style="width:610.5px"><span style="letter-spacing:0.242px">Смірнова Тетяна Юрьївна</span></span><span class="gc" style="width:118.3px"></span><span class="gc" style="width:186.6px">5029</span><span class="gc" style="width:160px"><i class="cb on"></i></span><span class="gc" style="width:139.4px">Аптека №83 ...</span><span class="gc" style="width:163.7px"></span><span class="gc last" style="width:63.5px"></span></div>
<div class="gr"><span class="ind"><i class="cur"></i></span><span class="gc" style="width:85.5px"><i class="cb"></i></span><span class="gc r" style="width:31.7px">2<span class=dd>...</span></span><span class="gc" style="width:610.5px"><span style="letter-spacing:-0.003px">Апт №003 пгт.Барышевка, ул.Киевский шлях,126а</span></span><span class="gc" style="width:118.3px"></span><span class="gc" style="width:186.6px"></span><span class="gc" style="width:160px"><i class="cb on"></i></span><span class="gc" style="width:139.4px">Апт №003 пг...</span><span class="gc" style="width:163.7px"></span><span class="gc last" style="width:63.5px">Апт №003</span></div>
<div class="gr"><span class="ind"></span><span class="gc" style="width:85.5px"><i class="cb"></i></span><span class="gc r" style="width:31.7px">7<span class=dd>...</span></span><span class="gc" style="width:610.5px"><span style="letter-spacing:0.199px">Апт №006 г.Киев, ул.Саксаганского,39-А</span></span><span class="gc" style="width:118.3px">124545</span><span class="gc" style="width:186.6px">3805</span><span class="gc" style="width:160px"><i class="cb on"></i></span><span class="gc" style="width:139.4px">А6 г.Киев ул....</span><span class="gc" style="width:163.7px"></span><span class="gc last" style="width:63.5px"></span></div>
<div class="gr"><span class="ind"></span><span class="gc" style="width:85.5px"><i class="cb"></i></span><span class="gc r" style="width:31.7px">81</span><span class="gc" style="width:610.5px"><span style="letter-spacing:0.041px">Апт №010 г.Березань, ул. Шевченковский шлях,156</span></span><span class="gc" style="width:118.3px">31268</span><span class="gc" style="width:186.6px">5241</span><span class="gc" style="width:160px"><i class="cb on"></i></span><span class="gc" style="width:139.4px">Апт №010 г.Б...</span><span class="gc" style="width:163.7px"></span><span class="gc last" style="width:63.5px">ТОВ</span></div>
<div class="gr"><span class="ind"></span><span class="gc" style="width:85.5px"><i class="cb"></i></span><span class="gc r" style="width:31.7px">7<span class=dd>...</span></span><span class="gc" style="width:610.5px"><span style="letter-spacing:0.193px">Апт №011 г.Киев, пр-т.Победы,142а</span></span><span class="gc" style="width:118.3px">32495</span><span class="gc" style="width:186.6px">5251</span><span class="gc" style="width:160px"><i class="cb on"></i></span><span class="gc" style="width:139.4px">Апт №011 г.К...</span><span class="gc" style="width:163.7px"></span><span class="gc last" style="width:63.5px">ТОВ</span></div>
<div class="gr"><span class="ind"></span><span class="gc" style="width:85.5px"><i class="cb"></i></span><span class="gc r" style="width:31.7px">7<span class=dd>...</span></span><span class="gc" style="width:610.5px"><span style="letter-spacing:0.202px">Апт №012 г.Киев, пр-т.Воздухофлотский,50/2</span></span><span class="gc" style="width:118.3px">32468</span><span class="gc" style="width:186.6px">5225</span><span class="gc" style="width:160px"><i class="cb on"></i></span><span class="gc" style="width:139.4px">Апт №012 г.К...</span><span class="gc" style="width:163.7px"></span><span class="gc last" style="width:63.5px"></span></div>
<div class="gr"><span class="ind"></span><span class="gc" style="width:85.5px"><i class="cb"></i></span><span class="gc r" style="width:31.7px">7<span class=dd>...</span></span><span class="gc" style="width:610.5px"><span style="letter-spacing:0.065px">Апт №015 г.Киев, б-р.Л.Украинки,19/16</span></span><span class="gc" style="width:118.3px">34435</span><span class="gc" style="width:186.6px">5226</span><span class="gc" style="width:160px"><i class="cb on"></i></span><span class="gc" style="width:139.4px">Апт №015 г.К...</span><span class="gc" style="width:163.7px"></span><span class="gc last" style="width:63.5px"></span></div>
<div class="gr"><span class="ind"></span><span class="gc" style="width:85.5px"><i class="cb"></i></span><span class="gc r" style="width:31.7px">7<span class=dd>...</span></span><span class="gc" style="width:610.5px"><span style="letter-spacing:-0.047px">Апт №022 г.Киев, б-р.Л.Украинки,34</span></span><span class="gc" style="width:118.3px">38131</span><span class="gc" style="width:186.6px">5227</span><span class="gc" style="width:160px"><i class="cb on"></i></span><span class="gc" style="width:139.4px">Апт №022 г.К...</span><span class="gc" style="width:163.7px"></span><span class="gc last" style="width:63.5px">ТМН ТАС</span></div>
<div class="gr"><span class="ind"></span><span class="gc" style="width:85.5px"><i class="cb"></i></span><span class="gc r" style="width:31.7px">7<span class=dd>...</span></span><span class="gc" style="width:610.5px"><span style="letter-spacing:0.103px">Апт №024 г.Киев, ул.Жилянская,146/13</span></span><span class="gc" style="width:118.3px"></span><span class="gc" style="width:186.6px">3623</span><span class="gc" style="width:160px"><i class="cb on"></i></span><span class="gc" style="width:139.4px">А№24 г.Киев ...</span><span class="gc" style="width:163.7px"></span><span class="gc last" style="width:63.5px"></span></div>
<div class="gr"><span class="ind"></span><span class="gc" style="width:85.5px"><i class="cb"></i></span><span class="gc r" style="width:31.7px">7<span class=dd>...</span></span><span class="gc" style="width:610.5px"><span style="letter-spacing:0.19px">Апт №027 г.Киев, ул.Урловская,11/44</span></span><span class="gc" style="width:118.3px">39450</span><span class="gc" style="width:186.6px">5252</span><span class="gc" style="width:160px"><i class="cb on"></i></span><span class="gc" style="width:139.4px">Апт №027 г.К...</span><span class="gc" style="width:163.7px"></span><span class="gc last" style="width:63.5px"></span></div>
<div class="gr"><span class="ind"></span><span class="gc" style="width:85.5px"><i class="cb"></i></span><span class="gc r" style="width:31.7px">7<span class=dd>...</span></span><span class="gc" style="width:610.5px"><span style="letter-spacing:0.102px">Апт №028 г.Киев, ул.Горького,47а</span></span><span class="gc" style="width:118.3px">39103</span><span class="gc" style="width:186.6px">3624</span><span class="gc" style="width:160px"><i class="cb on"></i></span><span class="gc" style="width:139.4px">Апт №028 г.К...</span><span class="gc" style="width:163.7px"></span><span class="gc last" style="width:63.5px"></span></div>
<div class="gr"><span class="ind"></span><span class="gc" style="width:85.5px"><i class="cb"></i></span><span class="gc r" style="width:31.7px">7<span class=dd>...</span></span><span class="gc" style="width:610.5px"><span style="letter-spacing:0.104px">Апт №032 г.Яготин, ул.Независимости,71</span></span><span class="gc" style="width:118.3px">39520</span><span class="gc" style="width:186.6px">5285</span><span class="gc" style="width:160px"><i class="cb on"></i></span><span class="gc" style="width:139.4px">Апт №032 г....</span><span class="gc" style="width:163.7px"></span><span class="gc last" style="width:63.5px"></span></div>
<div class="gr"><span class="ind"></span><span class="gc" style="width:85.5px"><i class="cb"></i></span><span class="gc r" style="width:31.7px">7<span class=dd>...</span></span><span class="gc" style="width:610.5px"><span style="letter-spacing:0.202px">Апт №033 г.Киев, ул.Институтская,16</span></span><span class="gc" style="width:118.3px">44447</span><span class="gc" style="width:186.6px">5229</span><span class="gc" style="width:160px"><i class="cb on"></i></span><span class="gc" style="width:139.4px">Апт №033 г.К...</span><span class="gc" style="width:163.7px"></span><span class="gc last" style="width:63.5px"></span></div>
<div class="gr"><span class="ind"></span><span class="gc" style="width:85.5px"><i class="cb"></i></span><span class="gc r" style="width:31.7px">7<span class=dd>...</span></span><span class="gc" style="width:610.5px"><span style="letter-spacing:0.08px">Апт №034 г.Киев, ул.Л.Толстого,5</span></span><span class="gc" style="width:118.3px">44870</span><span class="gc" style="width:186.6px">5230</span><span class="gc" style="width:160px"><i class="cb on"></i></span><span class="gc" style="width:139.4px">Апт №034 г.К...</span><span class="gc" style="width:163.7px"></span><span class="gc last" style="width:63.5px"></span></div>
<div class="gr"><span class="ind"></span><span class="gc" style="width:85.5px"><i class="cb"></i></span><span class="gc r" style="width:31.7px">7<span class=dd>...</span></span><span class="gc" style="width:610.5px"><span style="letter-spacing:0.113px">Апт №035 г.Вишневый, ул.Октябрьская,16</span></span><span class="gc" style="width:118.3px"></span><span class="gc" style="width:186.6px">3976</span><span class="gc" style="width:160px"><i class="cb on"></i></span><span class="gc" style="width:139.4px">А№35 г.Вишн...</span><span class="gc" style="width:163.7px"></span><span class="gc last" style="width:63.5px"></span></div>
<div class="gr"><span class="ind"></span><span class="gc" style="width:85.5px"><i class="cb"></i></span><span class="gc r" style="width:31.7px">7<span class=dd>...</span></span><span class="gc" style="width:610.5px"><span style="letter-spacing:0.056px">Апт №036 г.Киев, ул.Соломенская,33</span></span><span class="gc" style="width:118.3px">49029</span><span class="gc" style="width:186.6px">5253</span><span class="gc" style="width:160px"><i class="cb on"></i></span><span class="gc" style="width:139.4px">Апт №036 г.К...</span><span class="gc" style="width:163.7px"></span><span class="gc last" style="width:63.5px"></span></div>
<div class="gr"><span class="ind"></span><span class="gc" style="width:85.5px"><i class="cb"></i></span><span class="gc r" style="width:31.7px">7<span class=dd>...</span></span><span class="gc" style="width:610.5px"><span style="letter-spacing:-0.023px">Апт №040 г.Киев, ул.Нижний Вал,37/20</span></span><span class="gc" style="width:118.3px">51273</span><span class="gc" style="width:186.6px">5254</span><span class="gc" style="width:160px"><i class="cb on"></i></span><span class="gc" style="width:139.4px">Апт №040 г.К...</span><span class="gc" style="width:163.7px"></span><span class="gc last" style="width:63.5px"></span></div>
<div class="gr"><span class="ind"></span><span class="gc" style="width:85.5px"><i class="cb"></i></span><span class="gc r" style="width:31.7px">7<span class=dd>...</span></span><span class="gc" style="width:610.5px"><span style="letter-spacing:0.175px">Апт №042 г.Киев, ул.Старовокзальная,26</span></span><span class="gc" style="width:118.3px"></span><span class="gc" style="width:186.6px">4165</span><span class="gc" style="width:160px"><i class="cb on"></i></span><span class="gc" style="width:139.4px">А№42 г.Киев ...</span><span class="gc" style="width:163.7px"></span><span class="gc last" style="width:63.5px"></span></div>
<div class="gr"><span class="ind"></span><span class="gc" style="width:85.5px"><i class="cb"></i></span><span class="gc r" style="width:31.7px">7<span class=dd>...</span></span><span class="gc" style="width:610.5px"><span style="letter-spacing:0.125px">Апт №046 г.Бровары, ул.Гагарина,14</span></span><span class="gc" style="width:118.3px">54289</span><span class="gc" style="width:186.6px">5232</span><span class="gc" style="width:160px"><i class="cb on"></i></span><span class="gc" style="width:139.4px">Апт №046 г.Б...</span><span class="gc" style="width:163.7px"></span><span class="gc last" style="width:63.5px"></span></div>
<div class="gr"><span class="ind"></span><span class="gc" style="width:85.5px"><i class="cb"></i></span><span class="gc r" style="width:31.7px">7<span class=dd>...</span></span><span class="gc" style="width:610.5px"><span style="letter-spacing:0.171px">Апт №048 г.Киев, ул.Березняковская,36ж</span></span><span class="gc" style="width:118.3px">55075</span><span class="gc" style="width:186.6px">5256</span><span class="gc" style="width:160px"><i class="cb on"></i></span><span class="gc" style="width:139.4px">Апт №048 г.К...</span><span class="gc" style="width:163.7px"></span><span class="gc last" style="width:63.5px"></span></div>
<div class="gr"><span class="ind"></span><span class="gc" style="width:85.5px"><i class="cb"></i></span><span class="gc r" style="width:31.7px">7<span class=dd>...</span></span><span class="gc" style="width:610.5px"><span style="letter-spacing:-0.048px">Апт №051 г.Киев, ул.Р.Роллана,7а</span></span><span class="gc" style="width:118.3px">57998</span><span class="gc" style="width:186.6px">4436</span><span class="gc" style="width:160px"><i class="cb on"></i></span><span class="gc" style="width:139.4px">Апт №051 г.К...</span><span class="gc" style="width:163.7px"></span><span class="gc last" style="width:63.5px"></span></div>
<div class="gr"><span class="ind"></span><span class="gc" style="width:85.5px"><i class="cb"></i></span><span class="gc r" style="width:31.7px">7<span class=dd>...</span></span><span class="gc" style="width:610.5px"><span style="letter-spacing:0.122px">Апт №059 г.Киев,ул.Мазепы,9</span></span><span class="gc" style="width:118.3px">60518</span><span class="gc" style="width:186.6px">5258</span><span class="gc" style="width:160px"><i class="cb on"></i></span><span class="gc" style="width:139.4px">Апт №059 г.К...</span><span class="gc" style="width:163.7px"></span><span class="gc last" style="width:63.5px"></span></div>
<div class="gr"><span class="ind"></span><span class="gc" style="width:85.5px"><i class="cb"></i></span><span class="gc r" style="width:31.7px">7<span class=dd>...</span></span><span class="gc" style="width:610.5px"><span style="letter-spacing:0.314px">Апт №060 г.Киев, пр-т.Победы,49/2</span></span><span class="gc" style="width:118.3px">60362</span><span class="gc" style="width:186.6px">5259</span><span class="gc" style="width:160px"><i class="cb on"></i></span><span class="gc" style="width:139.4px">Апт №060 г.К...</span><span class="gc" style="width:163.7px"></span><span class="gc last" style="width:63.5px"></span></div>
<div class="gr"><span class="ind"></span><span class="gc" style="width:85.5px"><i class="cb"></i></span><span class="gc r" style="width:31.7px">7<span class=dd>...</span></span><span class="gc" style="width:610.5px"><span style="letter-spacing:0.106px">Апт №062 г.Киев, ул.Вышгородская,44б</span></span><span class="gc" style="width:118.3px">61565</span><span class="gc" style="width:186.6px">5260</span><span class="gc" style="width:160px"><i class="cb on"></i></span><span class="gc" style="width:139.4px">Апт №062 г.К...</span><span class="gc" style="width:163.7px"></span><span class="gc last" style="width:63.5px"></span></div>
<div class="gr"><span class="ind"></span><span class="gc" style="width:85.5px"><i class="cb"></i></span><span class="gc r" style="width:31.7px">7<span class=dd>...</span></span><span class="gc" style="width:610.5px"><span style="letter-spacing:-0.015px">Апт №065 г.Борисполь, ул.Киевский шлях,2/14</span></span><span class="gc" style="width:118.3px">64776</span><span class="gc" style="width:186.6px">5244</span><span class="gc" style="width:160px"><i class="cb on"></i></span><span class="gc" style="width:139.4px">Апт №065 г.Б...</span><span class="gc" style="width:163.7px"></span><span class="gc last" style="width:63.5px"></span></div>
<div class="gr"><span class="ind"></span><span class="gc" style="width:85.5px"><i class="cb"></i></span><span class="gc r" style="width:31.7px">7<span class=dd>...</span></span><span class="gc" style="width:610.5px"><span style="letter-spacing:0.143px">Апт №070 г.Мариуполь, пр-т.Ленина,90</span></span><span class="gc" style="width:118.3px">64415</span><span class="gc" style="width:186.6px">4726</span><span class="gc" style="width:160px"><i class="cb on"></i></span><span class="gc" style="width:139.4px">Апт №070 г....</span><span class="gc" style="width:163.7px"></span><span class="gc last" style="width:63.5px"></span></div>
<div class="gr"><span class="ind"></span><span class="gc" style="width:85.5px"><i class="cb"></i></span><span class="gc r" style="width:31.7px">7<span class=dd>...</span></span><span class="gc" style="width:610.5px"><span style="letter-spacing:0.273px">Апт №073 г.Мариуполь, пр-т.Металлургов,112</span></span><span class="gc" style="width:118.3px">65609</span><span class="gc" style="width:186.6px">5278</span><span class="gc" style="width:160px"><i class="cb on"></i></span><span class="gc" style="width:139.4px">Апт №073 г....</span><span class="gc" style="width:163.7px"></span><span class="gc last" style="width:63.5px"></span></div>
<div class="gr"><span class="ind"></span><span class="gc" style="width:85.5px"><i class="cb"></i></span><span class="gc r" style="width:31.7px">7<span class=dd>...</span></span><span class="gc" style="width:610.5px"><span style="letter-spacing:0.005px">Апт №074 г.П-Хмельницкий, ул.Б.Хмельницкого,104</span></span><span class="gc" style="width:118.3px"></span><span class="gc" style="width:186.6px">4885</span><span class="gc" style="width:160px"><i class="cb on"></i></span><span class="gc" style="width:139.4px">Аптека №74 ...</span><span class="gc" style="width:163.7px"></span><span class="gc last" style="width:63.5px"></span></div>
<div class="gr"><span class="ind"></span><span class="gc" style="width:85.5px"><i class="cb"></i></span><span class="gc r" style="width:31.7px">7<span class=dd>...</span></span><span class="gc" style="width:610.5px"><span style="letter-spacing:0.241px">Апт №075 г.Обухов, ул.Киевская,1/8</span></span><span class="gc" style="width:118.3px">67604</span><span class="gc" style="width:186.6px">5281</span><span class="gc" style="width:160px"><i class="cb on"></i></span><span class="gc" style="width:139.4px">Апт №075 г....</span><span class="gc" style="width:163.7px"></span><span class="gc last" style="width:63.5px"></span></div>
<div class="gr"><span class="ind"></span><span class="gc" style="width:85.5px"><i class="cb"></i></span><span class="gc r" style="width:31.7px">7<span class=dd>...</span></span><span class="gc" style="width:610.5px"><span style="letter-spacing:0.134px">Апт №076 г.Украинка, ул.Юности,1б</span></span><span class="gc" style="width:118.3px">67603</span><span class="gc" style="width:186.6px">4904</span><span class="gc" style="width:160px"><i class="cb on"></i></span><span class="gc" style="width:139.4px">Апт №076 г....</span><span class="gc" style="width:163.7px"></span><span class="gc last" style="width:63.5px"></span></div>
<div class="gr"><span class="ind"></span><span class="gc" style="width:85.5px"><i class="cb"></i></span><span class="gc r" style="width:31.7px">7<span class=dd>...</span></span><span class="gc" style="width:610.5px"><span style="letter-spacing:0.05px">Апт №078 г.Киев, пер.Политехнический,1/3</span></span><span class="gc" style="width:118.3px">67924</span><span class="gc" style="width:186.6px">5261</span><span class="gc" style="width:160px"><i class="cb on"></i></span><span class="gc" style="width:139.4px">Апт №078 г.К...</span><span class="gc" style="width:163.7px"></span><span class="gc last" style="width:63.5px"></span></div>
<div class="gr"><span class="ind"></span><span class="gc" style="width:85.5px"><i class="cb"></i></span><span class="gc r" style="width:31.7px">7<span class=dd>...</span></span><span class="gc" style="width:610.5px"><span style="letter-spacing:0.074px">Апт №079 г.Мироновка, ул.Ленина,61а</span></span><span class="gc" style="width:118.3px">68560</span><span class="gc" style="width:186.6px">5280</span><span class="gc" style="width:160px"><i class="cb on"></i></span><span class="gc" style="width:139.4px">Апт №079 г....</span><span class="gc" style="width:163.7px"></span><span class="gc last" style="width:63.5px"></span></div>
<div class="gr"><span class="ind"></span><span class="gc" style="width:85.5px"><i class="cb"></i></span><span class="gc r" style="width:31.7px">7<span class=dd>...</span></span><span class="gc" style="width:610.5px"><span style="letter-spacing:0.177px">Апт №087 г.Обухов ул.Киевская,166</span></span><span class="gc" style="width:118.3px"></span><span class="gc" style="width:186.6px">5164</span><span class="gc" style="width:160px"><i class="cb on"></i></span><span class="gc" style="width:139.4px">Аптека №87 ...</span><span class="gc" style="width:163.7px"></span><span class="gc last" style="width:63.5px"></span></div>
<div class="gr"><span class="ind"></span><span class="gc" style="width:85.5px"><i class="cb"></i></span><span class="gc r" style="width:31.7px">7<span class=dd>...</span></span><span class="gc" style="width:610.5px"><span style="letter-spacing:0.284px">Апт №09 г.Киев, ул.Баггаутовская,1(терапия)</span></span><span class="gc" style="width:118.3px"></span><span class="gc" style="width:186.6px">2786</span><span class="gc" style="width:160px"><i class="cb on"></i></span><span class="gc" style="width:139.4px">ул.Баггаутов...</span><span class="gc" style="width:163.7px"></span><span class="gc last" style="width:63.5px"></span></div>
<div class="gr"><span class="ind"></span><span class="gc" style="width:85.5px"><i class="cb"></i></span><span class="gc r" style="width:31.7px">7<span class=dd>...</span></span><span class="gc" style="width:610.5px"><span style="letter-spacing:0.12px">Апт №090 г.Киев, ул.Липовская,7/1</span></span><span class="gc" style="width:118.3px">72709</span><span class="gc" style="width:186.6px">5262</span><span class="gc" style="width:160px"><i class="cb on"></i></span><span class="gc" style="width:139.4px">Апт №090 г.К...</span><span class="gc" style="width:163.7px"></span><span class="gc last" style="width:63.5px"></span></div>
</div>
<div id="gfoot"><span class="find"></span><span class="fc" style="left:18.5px;width:80px;text-align:right;padding-right:2.5px">0</span><span class="fc" style="left:134px;width:606px;padding-left:3px"><span style="letter-spacing:-0.264px">Запис 2 із 151</span></span></div>
<div id="hsb"><i class="ch lf" style="left:6px"></i><i class="thumb" style="left:23px;width:1421px"></i><i class="ch rt" style="right:8px"></i></div>
<div class="vsb" id="vsb3"><i class="ch up" style="top:12px"></i><i class="thumb" style="top:26px;height:236px"></i><i class="ch dn" style="bottom:11px"></i></div>
</div>
<div class="red" style="left:7px;top:122px;width:2160px;height:41.5px"></div>
<div class="red" style="left:5px;top:165px;width:558.5px;height:301.5px"></div>
<div class="red" style="left:565px;top:165.5px;width:1604.5px;height:1150px"></div>
<div class="red" style="left:3px;top:470px;width:560.7px;height:845.6px"></div>
<span class="badge" style="left:944.5px;top:126px">1</span>
<span class="badge" style="left:493px;top:171px">2</span>
<span class="badge" style="left:948.3px;top:170.3px">3</span>
<span class="badge" style="left:487px;top:477px">4</span>
<div id="tabs"><span class="tab" style="left:4.5px;width:187px"><span style="letter-spacing:-0.08px">Головна</span></span><span class="tab act" style="left:194.5px;width:187px"><span style="letter-spacing:-0.343px">Асортимент матриці</span><i class="dots">...</i></span></div>
<div id="status">
<svg class="ic" style="left:4.5px;top:6.5px;width:18px;height:21px" ><use href="#db"/></svg>
<span class="st" style="left:30.5px"><span style="letter-spacing:-0.071px">База даних: TASA3@TITAN</span></span>
<i class="ssep" style="left:297px"></i>
<svg class="ic" style="left:303.5px;top:6.4px;width:16.5px;height:20.4px" ><use href="#user"/></svg>
<span class="st" style="left:329px"><span style="letter-spacing:-0.273px">Користувач: GIFT</span></span>
<i class="ssep" style="left:603px"></i>
<svg class="ic" style="left:607px;top:5px;width:21px;height:22px" ><use href="#plug"/></svg>
<span class="st" style="left:635px">2</span>
<i class="ssep" style="left:661.5px"></i>
<span class="st" style="left:666.5px"><span style="letter-spacing:-0.004px">Кассовый аппарат не подключен</span></span>
<i class="ssep" style="left:1117.5px"></i>
<span class="st" style="left:1122.5px"><span style="letter-spacing:-0.132px">Зона: Склад [1]</span></span>
</div>
</body></html>
